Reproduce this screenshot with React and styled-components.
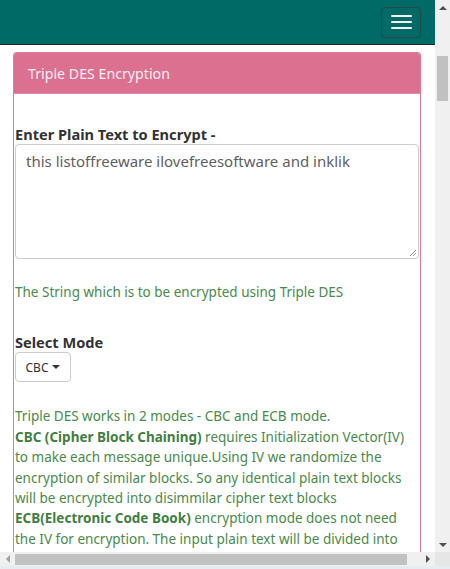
import React from "react";
import styled, { createGlobalStyle } from "styled-components";

const Global = createGlobalStyle`
  html, body { margin: 0; padding: 0; }
  body { font-family: "Noto Sans", "Open Sans", Arial, sans-serif; background: #e9f1f4; }
`;

const Frame = styled.div`
  width: 450px;
  height: 569px;
  display: grid;
  grid-template-columns: 435px 15px;
  grid-template-rows: 552px 14px 3px;
  overflow: hidden;
`;

const Viewport = styled.div`
  overflow: hidden;
  background: #fff;
  display: flex;
  flex-direction: column;
`;

const Navbar = styled.header`
  height: 44px;
  flex: none;
  background: #006a67;
  border-bottom: 1px solid #1a2b2a;
  display: flex;
  align-items: center;
  justify-content: flex-end;
  padding-right: 14px;
`;

const Burger = styled.button`
  width: 40px;
  height: 31px;
  box-sizing: border-box;
  border: 1px solid #214a48;
  border-radius: 4px;
  background: transparent;
  display: flex;
  flex-direction: column;
  align-items: center;
  justify-content: center;
  gap: 4px;
  padding: 0;
`;

const BurgerBar = styled.span`
  display: block;
  width: 21px;
  height: 2px;
  border-radius: 1px;
  background: #f4f4f4;
`;

const Panel = styled.section`
  margin: 7px 14px 0 13px;
  border: 1px solid #e07a98;
  border-bottom: none;
  border-radius: 4px 4px 0 0;
  flex: 1;
  display: flex;
  flex-direction: column;
`;

const PanelHeading = styled.div`
  height: 40px;
  background: #dc7090;
  border-bottom: 1px solid #e58aa5;
  border-radius: 3px 3px 0 0;
  display: flex;
  align-items: center;
  padding-left: 14px;
  color: #fbeef2;
  font-size: 14.2px;
`;

const PanelBody = styled.div`
  padding: 30px 1px 0 1px;
  display: flex;
  flex-direction: column;
`;

const Label = styled.label`
  font-weight: 700;
  font-size: 14.6px;
  color: #333;
  line-height: 20px;
  margin-top: ${(p) => p.$mt || 0}px;
`;

const TextArea = styled.div`
  height: 115px;
  box-sizing: border-box;
  border: 1px solid #ccc;
  border-radius: 4px;
  padding: 5px 10px;
  font-size: 15px;
  line-height: 22px;
  color: #5f5f5f;
  position: relative;
`;

const Grip = styled.svg`
  position: absolute;
  right: 1px;
  bottom: 1px;
`;

const Help = styled.p`
  margin: ${(p) => p.$mt}px 0 0 0;
  color: #4a8a4a;
  font-size: 13.5px;
  line-height: 20.4px;
  b { color: #3f7f3f; }
`;

const ModeButton = styled.button`
  align-self: flex-start;
  margin-top: 0;
  width: 56px;
  height: 30px;
  box-sizing: border-box;
  border: 1px solid #ccc;
  border-radius: 4px;
  background: #fff;
  font-family: inherit;
  font-size: 12px;
  color: #333;
  display: flex;
  align-items: center;
  justify-content: center;
  gap: 4px;
  padding: 0;
`;

const Caret = styled.span`
  width: 0;
  height: 0;
  border-left: 4px solid transparent;
  border-right: 4px solid transparent;
  border-top: 4px solid #333;
`;

const VScroll = styled.div`
  background: #f0f0f0;
  display: flex;
  flex-direction: column;
  align-items: center;
`;

const Arrow = styled.span`
  width: 0;
  height: 0;
  border-left: 4px solid transparent;
  border-right: 4px solid transparent;
  ${(p) => (p.$dir === "up" ? "border-bottom: 4px solid #505050;" : "border-top: 4px solid #505050;")}
`;

const VArrowBox = styled.div`
  height: 15px;
  display: flex;
  align-items: center;
  justify-content: center;
`;

const VThumb = styled.div`
  width: 11px;
  height: 45px;
  margin-top: 41px;
  background: #c1c1c1;
`;

const Spacer = styled.div`
  flex: 1;
`;

const HScroll = styled.div`
  background: #f0f0f0;
  display: flex;
  align-items: center;
`;

const HArrowBox = styled.div`
  width: 15px;
  display: flex;
  align-items: center;
  justify-content: center;
`;

const HArrow = styled.span`
  width: 0;
  height: 0;
  border-top: 4px solid transparent;
  border-bottom: 4px solid transparent;
  ${(p) => (p.$dir === "left" ? "border-right: 4px solid #a0a0a0;" : "border-left: 4px solid #505050;")}
`;

const HThumb = styled.div`
  width: 392px;
  height: 11px;
  background: #c1c1c1;
`;

const Corner = styled.div`
  background: #e6e6e6;
`;

const Strip = styled.div`
  grid-column: 1 / span 2;
  background: #e4eef2;
`;

export default function App() {
  return (
    <>
      <Global />
      <Frame>
        <Viewport>
          <Navbar>
            <Burger aria-label="menu">
              <BurgerBar />
              <BurgerBar />
              <BurgerBar />
            </Burger>
          </Navbar>
          <Panel>
            <PanelHeading>Triple DES Encryption</PanelHeading>
            <PanelBody>
              <Label>Enter Plain Text to Encrypt -</Label>
              <TextArea>
                this listoffreeware ilovefreesoftware and inklik
                <Grip width="9" height="9" viewBox="0 0 9 9">
                  <path d="M8 2 L2 8 M8 5 L5 8" stroke="#999" strokeWidth="1" />
                </Grip>
              </TextArea>
              <Help $mt={23}>The String which is to be encrypted using Triple DES</Help>
              <Label $mt={30}>Select Mode</Label>
              <ModeButton>
                CBC <Caret />
              </ModeButton>
              <Help $mt={24}>
                Triple DES works in 2 modes - CBC and ECB mode.
                <br />
                <b>CBC (Cipher Block Chaining)</b> requires Initialization Vector(IV) to make each message
                unique.Using IV we randomize the encryption of similar blocks. So any identical plain text
                blocks will be encrypted into disimmilar cipher text blocks
                <br />
                <b>ECB(Electronic Code Book)</b> encryption mode does not need the IV for encryption. The
                input plain text will be divided into blocks and each block will be encrypted with the key
                provided.
              </Help>
            </PanelBody>
          </Panel>
        </Viewport>
        <VScroll>
          <VArrowBox>
            <Arrow $dir="up" />
          </VArrowBox>
          <VThumb />
          <Spacer />
          <VArrowBox>
            <Arrow $dir="down" />
          </VArrowBox>
        </VScroll>
        <HScroll>
          <HArrowBox>
            <HArrow $dir="left" />
          </HArrowBox>
          <HThumb />
          <Spacer />
          <HArrowBox>
            <HArrow $dir="right" />
          </HArrowBox>
        </HScroll>
        <Corner />
        <Strip />
      </Frame>
    </>
  );
}
